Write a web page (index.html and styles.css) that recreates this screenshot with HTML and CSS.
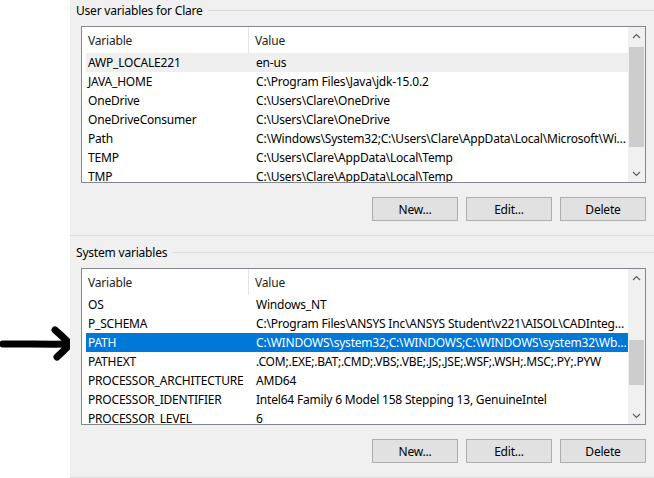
FILE: index.html
```html
<!DOCTYPE html>
<html lang="en">
<head>
  <meta charset="UTF-8">
  <meta name="viewport" content="width=device-width, initial-scale=1.0">
  <title>Environment Variables</title>
  <link rel="stylesheet" href="styles.css">
</head>
<body>
  <div class="page">
    <div class="gutter">
      <svg class="pointer" width="76" height="36" viewBox="0 0 76 36">
        <path d="M4 19 C20 18.5 45 19.5 70 19" fill="none" stroke="#000" stroke-width="7" stroke-linecap="round"/>
        <path d="M56 5 C62 10 67 15 71 19 C67 24 62 28 58 32" fill="none" stroke="#000" stroke-width="7" stroke-linecap="round" stroke-linejoin="round"/>
      </svg>
    </div>

    <div class="dialog">
      <section class="group">
        <div class="legend"><span>User variables for Clare</span></div>
        <div class="listview">
          <div class="list-main">
            <div class="list-head">
              <div class="head-var">Variable</div>
              <div class="head-val">Value</div>
            </div>
            <div class="row hot"><span>AWP_LOCALE221</span><span>en-us</span></div>
            <div class="row"><span>JAVA_HOME</span><span>C:\Program Files\Java\jdk-15.0.2</span></div>
            <div class="row"><span>OneDrive</span><span>C:\Users\Clare\OneDrive</span></div>
            <div class="row"><span>OneDriveConsumer</span><span>C:\Users\Clare\OneDrive</span></div>
            <div class="row"><span>Path</span><span>C:\Windows\System32;C:\Users\Clare\AppData\Local\Microsoft\WindowsApps;C:\Users\Clare\bin</span></div>
            <div class="row"><span>TEMP</span><span>C:\Users\Clare\AppData\Local\Temp</span></div>
            <div class="row"><span>TMP</span><span>C:\Users\Clare\AppData\Local\Temp</span></div>
          </div>
          <div class="scrollbar">
            <div class="sb-btn">
              <svg width="9" height="6" viewBox="0 0 9 6"><path d="M1 5 L4.5 1.5 L8 5" fill="none" stroke="#606060" stroke-width="1.2"/></svg>
            </div>
            <div class="sb-track"><div class="sb-thumb thumb-user"></div></div>
            <div class="sb-btn">
              <svg width="9" height="6" viewBox="0 0 9 6"><path d="M1 1 L4.5 4.5 L8 1" fill="none" stroke="#606060" stroke-width="1.2"/></svg>
            </div>
          </div>
        </div>
        <div class="actions">
          <button class="btn">New...</button>
          <button class="btn">Edit...</button>
          <button class="btn">Delete</button>
        </div>
      </section>

      <section class="group">
        <div class="legend"><span>System variables</span></div>
        <div class="listview">
          <div class="list-main">
            <div class="list-head">
              <div class="head-var">Variable</div>
              <div class="head-val">Value</div>
            </div>
            <div class="row"><span>OS</span><span>Windows_NT</span></div>
            <div class="row"><span>P_SCHEMA</span><span>C:\Program Files\ANSYS Inc\ANSYS Student\v221\AISOL\CADIntegration\Parasolid\PSchema</span></div>
            <div class="row selected"><span>PATH</span><span>C:\WINDOWS\system32;C:\WINDOWS;C:\WINDOWS\system32\Wbem;C:\WINDOWS\System32\WindowsPowerShell</span></div>
            <div class="row"><span>PATHEXT</span><span>.COM;.EXE;.BAT;.CMD;.VBS;.VBE;.JS;.JSE;.WSF;.WSH;.MSC;.PY;.PYW</span></div>
            <div class="row"><span>PROCESSOR_ARCHITECTURE</span><span>AMD64</span></div>
            <div class="row"><span>PROCESSOR_IDENTIFIER</span><span>Intel64 Family 6 Model 158 Stepping 13, GenuineIntel</span></div>
            <div class="row"><span>PROCESSOR_LEVEL</span><span>6</span></div>
          </div>
          <div class="scrollbar">
            <div class="sb-btn">
              <svg width="9" height="6" viewBox="0 0 9 6"><path d="M1 5 L4.5 1.5 L8 5" fill="none" stroke="#606060" stroke-width="1.2"/></svg>
            </div>
            <div class="sb-track"><div class="sb-thumb thumb-system"></div></div>
            <div class="sb-btn">
              <svg width="9" height="6" viewBox="0 0 9 6"><path d="M1 1 L4.5 4.5 L8 1" fill="none" stroke="#606060" stroke-width="1.2"/></svg>
            </div>
          </div>
        </div>
        <div class="actions">
          <button class="btn">New...</button>
          <button class="btn">Edit...</button>
          <button class="btn">Delete</button>
        </div>
      </section>
    </div>
  </div>
</body>
</html>
```

FILE: styles.css
```css
body {
  margin: 0;
  background-color: #ffffff;
  font-family: 'Noto Sans', 'Open Sans', sans-serif;
  font-size: 12px;
  letter-spacing: -0.2px;
  color: #000;
}

.page {
  display: flex;
  width: 654px;
  height: 478px;
  overflow: hidden;
}

/* white margin with the hand-drawn arrow */
.gutter {
  width: 70px;
  flex-shrink: 0;
  display: flex;
  flex-direction: column;
}

.pointer {
  margin-top: 325px;
  margin-left: -1px;
}

.dialog {
  flex: 1;
  background-color: #f0f0f0;
  display: flex;
  flex-direction: column;
}

.group {
  border-bottom: 1px solid #dcdcdc;
  padding-bottom: 14px;
}

.group + .group {
  margin-top: 6px;
}

.legend {
  height: 20px;
  display: flex;
  align-items: center;
  padding-left: 6px;
  white-space: nowrap;
}

.legend::after {
  content: '';
  flex: 1;
  height: 1px;
  margin-left: 5px;
  background-color: #dcdcdc;
}

/* list view */
.listview {
  margin: 6px 8px 0 11px;
  height: 157px;
  box-sizing: border-box;
  border: 1px solid #828790;
  background-color: #ffffff;
  display: flex;
  overflow: hidden;
}

.list-main {
  flex: 1;
  min-width: 0;
}

.list-head {
  display: grid;
  grid-template-columns: 167px 1fr;
  height: 26px;
}

.head-var,
.head-val {
  display: flex;
  align-items: center;
  padding-left: 6px;
  color: #1e1e1e;
}

.head-var {
  border-right: 1px solid #e5e5e5;
}

.row {
  display: grid;
  grid-template-columns: 168px 1fr;
  height: 19px;
  line-height: 19px;
  margin-left: 4px;
}

.row span {
  padding-left: 2px;
  white-space: nowrap;
  overflow: hidden;
  text-overflow: ellipsis;
}

.row.hot {
  background-color: #efefef;
}

.row.selected {
  background-color: #0078d7;
  color: #ffffff;
}

/* scrollbar */
.scrollbar {
  width: 17px;
  flex-shrink: 0;
  background-color: #f0f0f0;
  display: flex;
  flex-direction: column;
}

.sb-btn {
  height: 17px;
  display: flex;
  justify-content: center;
  align-items: center;
}

.sb-track {
  flex: 1;
}

.sb-thumb {
  margin: 0 1px;
  background-color: #cdcdcd;
}

.thumb-user {
  margin-top: 3px;
  height: 100px;
}

.thumb-system {
  margin-top: 54px;
  height: 45px;
}

/* buttons */
.actions {
  display: flex;
  justify-content: flex-end;
  gap: 8px;
  margin: 14px 8px 0 0;
}

.btn {
  width: 86px;
  height: 24px;
  background-color: #e1e1e1;
  border: 1px solid #adadad;
  font-family: inherit;
  font-size: 12px;
  letter-spacing: inherit;
  color: #000;
  padding: 0;
}
```
